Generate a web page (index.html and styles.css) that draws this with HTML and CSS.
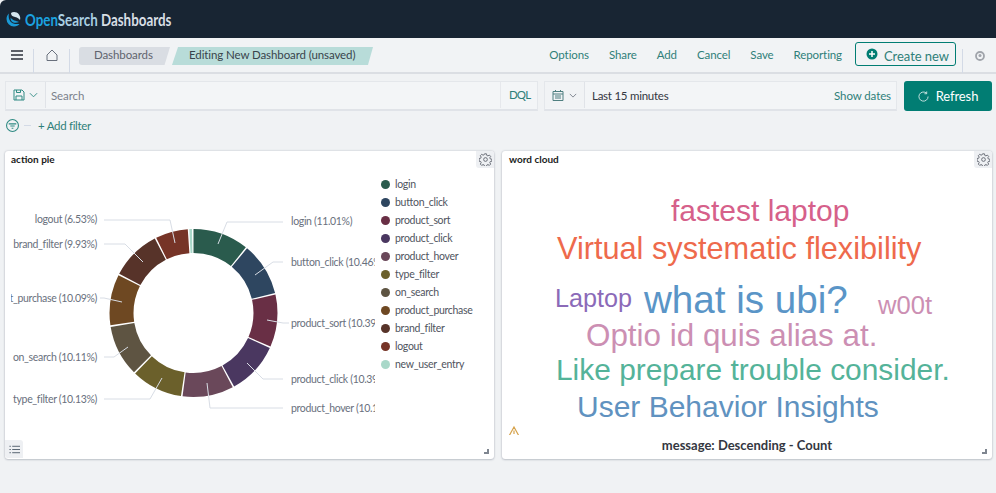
FILE: index.html
```html
<!DOCTYPE html>
<html lang="en">
<head>
<meta charset="utf-8">
<title>Editing New Dashboard</title>
<link rel="stylesheet" href="styles.css">
</head>
<body>
<header class="top">
  <svg class="logo" viewBox="0 0 16 16" width="16" height="16"><path class="logo-b" d="M3 2.500C1.200 4 .5 6 .5 8A7.500 7.500 0 0 0 8 15.500c2.500 0 4.500-1 5.500-2.500-4 .5-8.500-.5-10-4C2.500 6.500 2.500 4.500 3 2.500z"/><path class="logo-c" d="M5 2c2-1.500 6-1.200 8 1.500 1.300 1.800 1.500 4 1 5.500-2-2.500-4.500-3-6.500-3.500C5.800 5 5 3.500 5 2z"/><path class="logo-b" d="M4.500 6.500c2 3 5.500 3.300 8.500 4.500-2.500 1.500-7 1-8.200-2z"/></svg>
  <span class="brand"><span class="b-open">Open</span><span class="b-search">Search</span> Dashboards</span>
</header>

<nav class="subnav">
  <button class="nav-icon first" aria-label="Menu"><svg viewBox="0 0 12 10" width="12" height="10"><path class="st-dark2" d="M0 1h12.500M0 5h12.500M0 9h12.500"/></svg></button>
  <button class="nav-icon second" aria-label="Home"><svg viewBox="0 0 12 12" width="12" height="12"><path class="st-grey" d="M1 11.500V6l5-5 5 5v5.500z"/></svg></button>
  <div class="crumbs">
    <span class="crumb crumb-a">Dashboards</span>
    <span class="crumb crumb-b">Editing New Dashboard (unsaved)</span>
  </div>
  <div class="links">
    <a>Options</a><a>Share</a><a>Add</a><a>Cancel</a><a>Save</a><a>Reporting</a>
  </div>
  <button class="create"><svg viewBox="0 0 12 12" width="12" height="12"><circle class="fill-teal" cx="6" cy="6" r="5.500"/><path class="st-white" d="M3 6h6M6 3v6"/></svg><span class="create-text">Create new</span></button>
  <div class="help"><svg viewBox="0 0 10 10" width="10" height="10"><circle class="st-help" cx="5" cy="5" r="4"/><circle class="fill-help" cx="5" cy="4.600" r="1.500"/></svg></div>
</nav>

<section class="query">
  <div class="field search">
    <div class="prepend p-search">
      <svg viewBox="0 0 12 12" width="12" height="12"><path class="st-teal" d="M1 1h8l2 2v8H1zM3.500 1v2.500h4V1M3 11V7h6v4"/></svg>
      <svg viewBox="0 0 10 6" width="9" height="6"><path class="st-teal" d="M1 1l4 4 4-4"/></svg>
    </div>
    <span class="ph">Search</span>
    <span class="dql">DQL</span>
  </div>
  <div class="field date">
    <div class="prepend p-date">
      <svg viewBox="0 0 12 12" width="12" height="12"><path class="st-teal2" d="M1 2.500h10v9H1zM1 5h10M3.500 1v2M8.500 1v2M3 7h6M3 9h6"/></svg>
      <svg viewBox="0 0 10 6" width="8" height="5"><path class="st-grey" d="M1 1l4 4 4-4"/></svg>
    </div>
    <span class="range">Last 15 minutes</span>
    <span class="show">Show dates</span>
  </div>
  <button class="refresh"><svg viewBox="0 0 12 12" width="11" height="11"><path class="st-white2" d="M9.500 2.500A5 5 0 1 0 11 6M9.500.5v2.500H7"/></svg>Refresh</button>
</section>

<div class="filters">
  <svg viewBox="0 0 12 12" width="13" height="13"><circle class="st-teal" cx="6" cy="6" r="5.500"/><path class="st-teal" d="M2.500 4.500h7M4 6.500h4M5.200 8.500h1.600"/></svg>
  <span class="dash"></span>
  <a class="add">+ Add filter</a>
</div>

<main class="panels">
  <article class="panel">
    <h2 class="title">action pie</h2>
    <button class="gear" aria-label="Settings"><svg viewBox="0 0 16 16" width="13" height="13"><path class="st-gear" d="M6.800 1h2.400l.4 2 1.400.6 1.700-1.100 1.700 1.700-1.100 1.700.6 1.400 2 .4v2.400l-2 .4-.6 1.400 1.100 1.700-1.700 1.700-1.700-1.100-1.400.6-.4 2H6.800l-.4-2-1.400-.6-1.700 1.100-1.700-1.700 1.100-1.700-.6-1.400-2-.4V6.800l2-.4.6-1.400-1.100-1.700 1.700-1.700 1.700 1.100 1.400-.6z"/><circle class="st-gear" cx="8" cy="8" r="2.300"/></svg></button>
    <div class="pie-row">
      <svg class="pie" viewBox="11 169 364 290" width="364" height="290">
        <g class="rim">
          <circle class="s s1" cx="193.500" cy="313" r="72" pathLength="100" stroke-dasharray="10.710 89.290" stroke-dashoffset="0"/>
          <circle class="s s2" cx="193.500" cy="313" r="72" pathLength="100" stroke-dasharray="10.160 89.840" stroke-dashoffset="-11.010"/>
          <circle class="s s3" cx="193.500" cy="313" r="72" pathLength="100" stroke-dasharray="10.090 89.910" stroke-dashoffset="-21.470"/>
          <circle class="s s4" cx="193.500" cy="313" r="72" pathLength="100" stroke-dasharray="10.090 89.910" stroke-dashoffset="-31.860"/>
          <circle class="s s5" cx="193.500" cy="313" r="72" pathLength="100" stroke-dasharray="9.850 90.150" stroke-dashoffset="-42.250"/>
          <circle class="s s6" cx="193.500" cy="313" r="72" pathLength="100" stroke-dasharray="9.830 90.170" stroke-dashoffset="-52.400"/>
          <circle class="s s7" cx="193.500" cy="313" r="72" pathLength="100" stroke-dasharray="9.810 90.190" stroke-dashoffset="-62.530"/>
          <circle class="s s8" cx="193.500" cy="313" r="72" pathLength="100" stroke-dasharray="9.790 90.210" stroke-dashoffset="-72.640"/>
          <circle class="s s9" cx="193.500" cy="313" r="72" pathLength="100" stroke-dasharray="9.630 90.370" stroke-dashoffset="-82.730"/>
          <circle class="s s10" cx="193.500" cy="313" r="72" pathLength="100" stroke-dasharray="6.230 93.770" stroke-dashoffset="-92.660"/>
          <circle class="s s11" cx="193.500" cy="313" r="72" pathLength="100" stroke-dasharray="0.510 99.490" stroke-dashoffset="-99.190"/>
        </g>
        <g class="leaders">
          <path d="M218 244l9-22h56"/>
          <path d="M255 275l18-13h10"/>
          <path d="M267 320l16 3h6"/>
          <path d="M247 363l16 16h20"/>
          <path d="M207 383l3 25h73"/>
          <path d="M162 378l-12 21h-46"/>
          <path d="M128 347l-14 10h-10"/>
          <path d="M122 302l-18-4h-4"/>
          <path d="M143 262l-18-18h-21"/>
          <path d="M175 243l-5-23h-66"/>
        </g>
        <g class="labels">
          <text x="291" y="225">login (11.01%)</text>
          <text x="291" y="266">button_click (10.46%)</text>
          <text x="291" y="327">product_sort (10.39%)</text>
          <text x="291" y="383">product_click (10.39%)</text>
          <text x="291" y="412">product_hover (10.15%)</text>
        </g>
        <g class="labels end">
          <text x="97" y="223">logout (6.53%)</text>
          <text x="97" y="248">brand_filter (9.93%)</text>
          <text x="97" y="302">product_purchase (10.09%)</text>
          <text x="97" y="361">on_search (10.11%)</text>
          <text x="97" y="403">type_filter (10.13%)</text>
        </g>
      </svg>
      <ul class="legend">
        <li><i class="d d1"></i>login</li>
        <li><i class="d d2"></i>button_click</li>
        <li><i class="d d3"></i>product_sort</li>
        <li><i class="d d4"></i>product_click</li>
        <li><i class="d d5"></i>product_hover</li>
        <li><i class="d d6"></i>type_filter</li>
        <li><i class="d d7"></i>on_search</li>
        <li><i class="d d8"></i>product_purchase</li>
        <li><i class="d d9"></i>brand_filter</li>
        <li><i class="d d10"></i>logout</li>
        <li><i class="d d11"></i>new_user_entry</li>
      </ul>
    </div>
    <button class="legend-toggle" aria-label="Toggle legend"><svg viewBox="0 0 12 12" width="11" height="11"><path class="st-list" d="M3.500 2.500H12M3.500 6H12M3.500 9.500H12M.5 2.500h1.500M.5 6h1.500M.5 9.500h1.500"/></svg></button>
    <span class="resize"></span>
  </article>

  <article class="panel">
    <h2 class="title wc">word cloud</h2>
    <button class="gear" aria-label="Settings"><svg viewBox="0 0 16 16" width="13" height="13"><path class="st-gear" d="M6.800 1h2.400l.4 2 1.400.6 1.700-1.100 1.700 1.700-1.100 1.700.6 1.400 2 .4v2.400l-2 .4-.6 1.400 1.100 1.700-1.700 1.700-1.700-1.100-1.400.6-.4 2H6.800l-.4-2-1.400-.6-1.700 1.100-1.700-1.700 1.100-1.700-.6-1.400-2-.4V6.800l2-.4.6-1.400-1.100-1.700 1.700-1.700 1.700 1.100 1.400-.6z"/><circle class="st-gear" cx="8" cy="8" r="2.300"/></svg></button>
    <svg class="cloud" viewBox="502 169 490 266" width="490" height="266">
      <text class="w w-pink" x="671" y="221" font-size="30">fastest laptop</text>
      <text class="w w-red" x="557" y="259" font-size="30.700">Virtual systematic flexibility</text>
      <text class="w w-purple" x="555" y="307" font-size="25.200">Laptop</text>
      <text class="w w-blue" x="644" y="313" font-size="38.600">what is ubi?</text>
      <text class="w w-mauve" x="878" y="314" font-size="25.600">w00t</text>
      <text class="w w-mauve" x="586" y="346" font-size="31.400">Optio id quis alias at.</text>
      <text class="w w-green" x="556" y="380" font-size="29.900">Like prepare trouble consider.</text>
      <text class="w w-steel" x="577" y="417" font-size="30">User Behavior Insights</text>
      <path class="warn" d="M514 427l5.500 10h-11zM514 430.500v3.500M514 435v1.200"/>
    </svg>
    <p class="caption">message: Descending - Count</p>
    <span class="resize"></span>
  </article>
</main>
</body>
</html>
```

FILE: styles.css
```css
* { box-sizing: border-box; }
html, body { margin: 0; padding: 0; }
body {
  width: 996px;
  height: 493px;
  overflow: hidden;
  background: #f0f2f4;
  font-family: "Lato", "Noto Sans", sans-serif;
  font-size: 11.500px;
  letter-spacing: -.1px;
  color: #343741;
}
svg { display: block; flex: none; fill: none; }
button { font: inherit; letter-spacing: inherit; border: 0; background: none; padding: 0; margin: 0; }

.top {
  height: 38px;
  background: #182533;
  border-top-left-radius: 6px;
  display: flex;
  align-items: center;
  padding-left: 6px;
}
.logo { margin-right: 3px; }
.logo-b { fill: #1a9ad6; }
.logo-c { fill: #d5e6ef; }
.brand {
  font-size: 17px;
  font-weight: 700;
  letter-spacing: 0;
  color: #d7dee4;
  transform: scaleX(.785);
  transform-origin: left center;
  white-space: nowrap;
}
.b-open { color: #1ba3e0; }
.b-search { color: #a9cfe2; }

.subnav {
  height: 36px;
  display: flex;
  align-items: center;
  border-bottom: 2px solid #dbdee3;
  background: #f1f3f5;
}
.nav-icon {
  height: 24px;
  margin-top: 12px;
  border-right: 1px solid #d3dae6;
  display: flex;
  justify-content: center;
  align-items: flex-start;
}
.first { width: 34px; padding-top: 1px; }
.second { width: 36px; }
.crumbs { display: flex; margin-left: 9px; gap: 2px; align-self: flex-start; margin-top: 9px; }
.crumb { height: 18px; line-height: 16px; }
.crumb-a {
  width: 91px;
  padding-left: 15px;
  background: #d9dde3;
  color: #5f646e;
  border-radius: 3px 0 0 3px;
  clip-path: polygon(0 0, 100% 0, 94% 100%, 0 100%);
}
.crumb-b {
  width: 201px;
  padding-left: 17px;
  background: #b8dcd9;
  color: #39444c;
  clip-path: polygon(3% 0, 100% 0, 97.500% 100%, 0 100%);
}
.links { margin-left: auto; display: flex; color: #2f7f79; align-self: flex-start; margin-top: 10px; }
.links a { margin-left: 20px; white-space: nowrap; }
.create {
  margin-left: 13px;
  width: 101px;
  height: 24px;
  margin-top: -2px;
  padding-left: 10px;
  border: 1px solid #017d73;
  border-radius: 3px;
  color: #2f7f79;
  font-size: 13px;
  letter-spacing: -.05px;
  display: flex;
  align-items: center;
  gap: 6px;
  background: #f1f3f5;
}
.create-text { margin-top: 4px; }
.help { width: 34px; height: 24px; margin: 12px 0 0 6px; border-left: 1px solid #d3dae6; display: flex; justify-content: center; padding-top: 2px; }

.query { display: flex; margin: 7px 4px 0 5px; height: 30px; }
.field { display: flex; align-items: center; height: 30px; padding-bottom: 1px; background: #f3f5f7; border: 1px solid #e4e7eb; border-bottom: 2px solid #e0e3e8; }
.search { width: 533px; }
.date { width: 353px; margin-left: 6px; }
.prepend { height: 100%; display: flex; align-items: center; border-right: 1px solid #e0e3e8; background: #f1f3f5; flex: none; }
.p-search { width: 40px; padding-left: 7px; gap: 4px; }
.p-date { width: 40px; padding-left: 7px; gap: 5px; }
.ph { margin-left: 5px; color: #7b818b; }
.dql { margin-left: auto; width: 37px; height: 100%; border-left: 1px solid #e6e8ec; line-height: 26px; padding-left: 8px; color: #2f7f79; letter-spacing: -.9px; }
.range { margin-left: 7px; color: #343741; letter-spacing: -.25px; }
.show { margin-left: auto; margin-right: 5px; color: #2f7f79; }
.refresh {
  margin-left: 7px;
  width: 88px;
  height: 30px;
  border-radius: 3px;
  background: #017d73;
  color: #fff;
  font-size: 13px;
  font-weight: 400;
  display: flex;
  align-items: center;
  justify-content: center;
  gap: 7px;
}

.filters { display: flex; align-items: center; height: 14px; margin: 7px 0 0 6px; color: #2f7f79; }
.dash { width: 7px; height: 1px; background: #d3dae6; margin: 0 7px 0 5px; }
.add { color: #2f7f79; letter-spacing: -.3px; }

.panels { display: grid; grid-template-columns: 489px 490px; gap: 8px; margin: 19px 4px 0 5px; }
.panel {
  position: relative;
  height: 308px;
  background: #fff;
  border-radius: 3px;
  box-shadow: 0 0 2px rgba(60, 70, 90, .3), 0 1px 2px rgba(60, 70, 90, .2);
  display: flex;
  flex-direction: column;
}
.title { height: 18px; margin: 0; padding: 2px 0 0 6px; font-size: 10px; font-weight: 700; line-height: 12px; letter-spacing: 0; color: #1a1c21; }
.wc { padding-left: 7px; }
.gear {
  position: absolute;
  top: 0;
  right: 0;
  width: 18px;
  height: 17px;
  background: #eef0f3;
  border-radius: 0 3px 0 3px;
  display: flex;
  align-items: center;
  justify-content: center;
}
.pie-row { display: flex; height: 290px; }
.pie { margin-left: 6px; }
.rim circle { transform: rotate(-90deg); transform-origin: 193.500px 313px; fill: none; stroke-width: 24; }
.s1 { stroke: #2a5b4d; } .s2 { stroke: #2e4660; } .s3 { stroke: #692f45; } .s4 { stroke: #4a3760; }
.s5 { stroke: #6a485a; } .s6 { stroke: #6b602b; } .s7 { stroke: #5e5442; } .s8 { stroke: #6e4822; }
.s9 { stroke: #573329; } .s10 { stroke: #763427; } .s11 { stroke: #a9d8c9; }
.leaders path { stroke: #d8dde5; stroke-width: 1; fill: none; }
.labels text { font-size: 10.500px; letter-spacing: -.33px; fill: #69707d; }
.end text { text-anchor: end; }
.legend { list-style: none; margin: 6px 0 0; padding: 0 0 0 6px; }
.legend li { height: 18px; display: flex; align-items: center; gap: 5px; font-size: 10.500px; letter-spacing: -.3px; color: #4f545e; white-space: nowrap; }
.d { width: 9px; height: 9px; border-radius: 50%; }
.d1 { background: #2a5b4d; } .d2 { background: #2e4660; } .d3 { background: #692f45; } .d4 { background: #4a3760; }
.d5 { background: #6a485a; } .d6 { background: #6b602b; } .d7 { background: #5e5442; } .d8 { background: #6e4822; }
.d9 { background: #573329; } .d10 { background: #763427; } .d11 { background: #a9d8c9; }
.legend-toggle {
  position: absolute;
  left: 0;
  bottom: 1px;
  width: 18px;
  height: 18px;
  background: #eef0f3;
  border-radius: 0 3px 0 3px;
  display: flex;
  align-items: center;
  justify-content: center;
}
.resize { position: absolute; right: 5px; bottom: 5px; width: 5px; height: 5px; border-right: 2px solid #7f8690; border-bottom: 2px solid #7f8690; }

.w { font-family: "Liberation Sans", Arial, sans-serif; letter-spacing: 0; }
.w-pink { fill: #d6608a; } .w-red { fill: #ee6a4c; } .w-purple { fill: #8b6ab8; } .w-blue { fill: #5a95c7; }
.w-mauve { fill: #cc8fb3; } .w-green { fill: #54b399; } .w-steel { fill: #6092c0; }
.warn { stroke: #d6a24a; stroke-width: 1.200; fill: none; }
.caption { margin: 0; text-align: center; font-weight: 700; font-size: 13px; line-height: 20px; letter-spacing: 0; color: #343741; }

.st-dark2 { stroke: #5c6068; stroke-width: 1.800; }
.st-grey { stroke: #69707d; stroke-width: 1; }
.st-teal { stroke: #2f8a83; stroke-width: 1; }
.st-teal2 { stroke: #4f7f80; stroke-width: 1; }
.st-white { stroke: #fff; stroke-width: 1.500; }
.st-white2 { stroke: #cfe6e4; stroke-width: 1; }
.fill-teal { fill: #017d73; }
.st-help { stroke: #a0a4ab; stroke-width: 1.800; }
.fill-help { fill: #a0a4ab; }
.st-gear { stroke: #5f646e; stroke-width: 1.100; }
.st-list { stroke: #4b5a68; stroke-width: 1; }
```
